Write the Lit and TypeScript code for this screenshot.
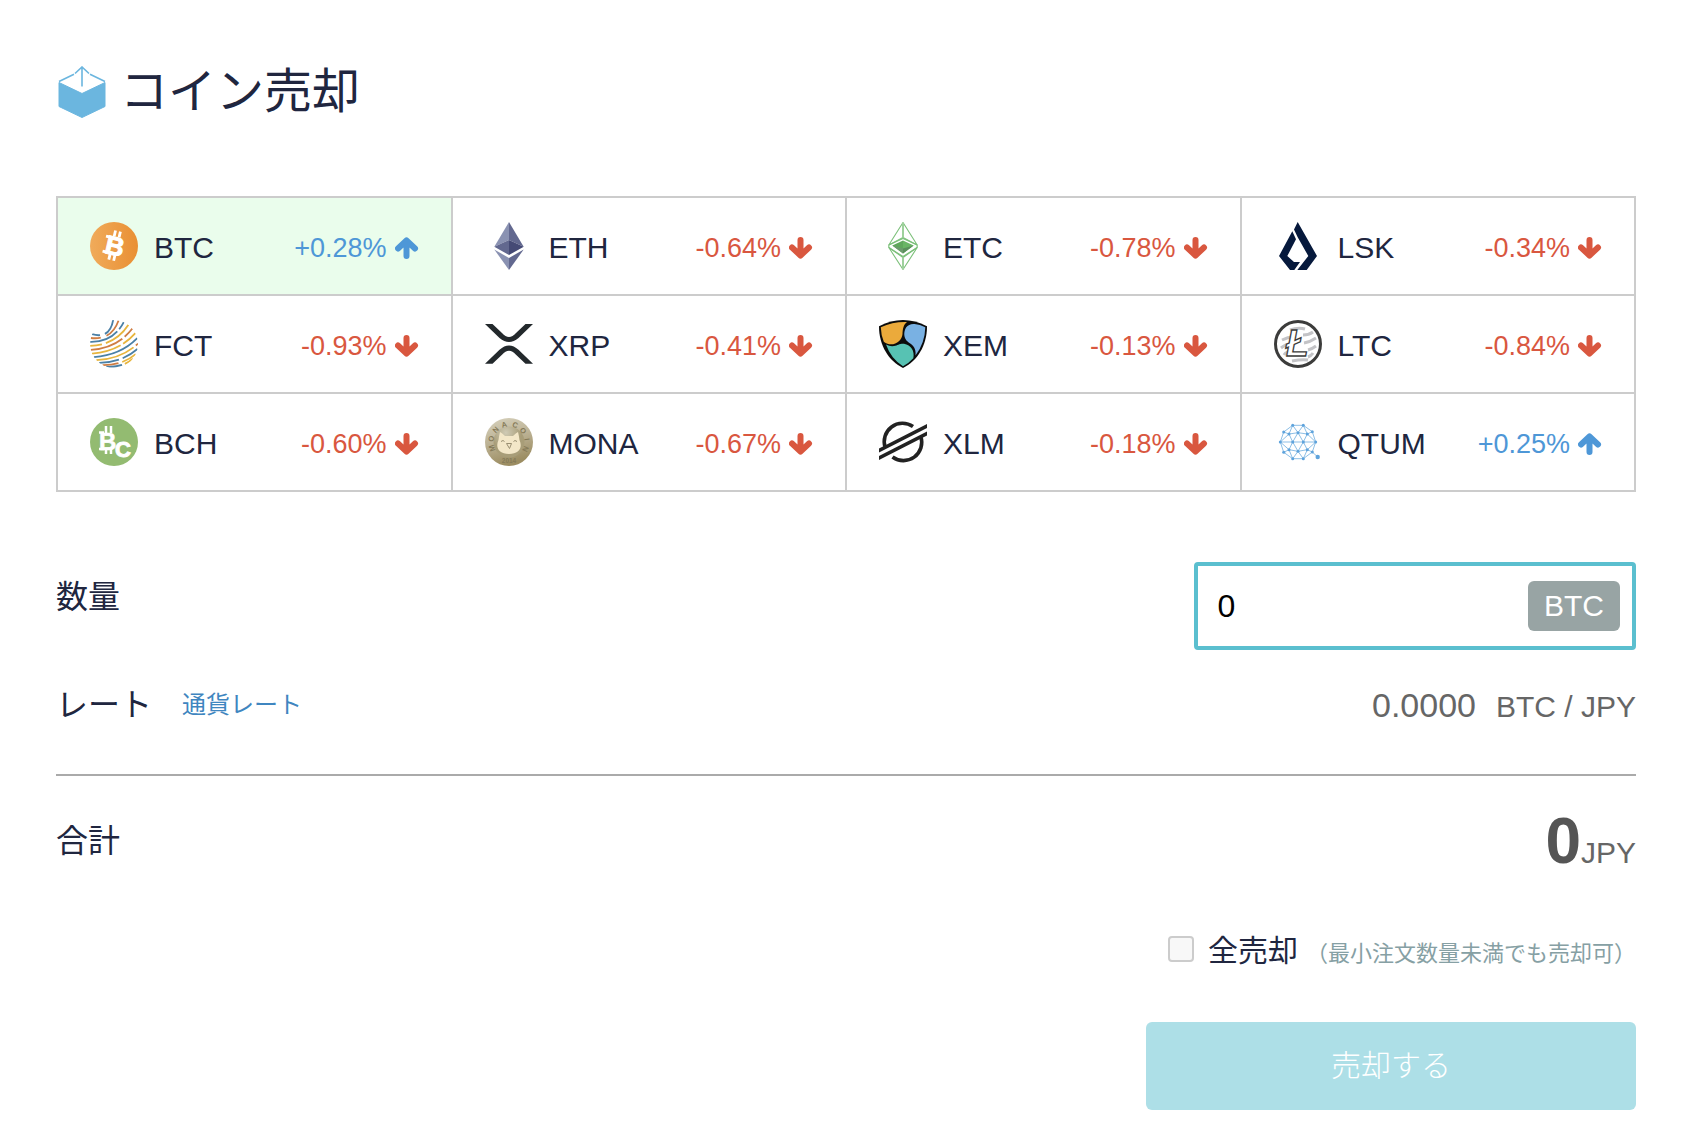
import { LitElement, html, svg, css, TemplateResult, SVGTemplateResult } from "lit";
import { customElement, property, state } from "lit/decorators.js";
import { classMap } from "lit/directives/class-map.js";

interface Coin {
  code: string;
  change: number;
}

const COINS: Coin[] = [
  { code: "BTC", change: 0.28 },
  { code: "ETH", change: -0.64 },
  { code: "ETC", change: -0.78 },
  { code: "LSK", change: -0.34 },
  { code: "FCT", change: -0.93 },
  { code: "XRP", change: -0.41 },
  { code: "XEM", change: -0.13 },
  { code: "LTC", change: -0.84 },
  { code: "BCH", change: -0.6 },
  { code: "MONA", change: -0.67 },
  { code: "XLM", change: -0.18 },
  { code: "QTUM", change: 0.25 },
];

const QTUM_NODES: [number, number][] = [
  [18.7, 7.3], [29.3, 7.3], [9.7, 14], [38.3, 13.7], [24, 14.7], [15, 16],
  [33.3, 16], [6.3, 24], [18.7, 24], [29.3, 24], [41.7, 24], [15, 31.7],
  [33.3, 31.7], [9.7, 34.3], [38.3, 34], [24, 33.3], [18.7, 40.7], [29.3, 40.7],
];

const QTUM_EDGES: [number, number][] = [
  [0, 1], [0, 2], [1, 3], [0, 4], [1, 4], [0, 5], [1, 6], [2, 5], [3, 6],
  [5, 4], [4, 6], [2, 7], [3, 10], [5, 7], [6, 10], [5, 8], [4, 8], [4, 9],
  [6, 9], [7, 8], [8, 9], [9, 10], [7, 11], [7, 13], [8, 11], [8, 15],
  [9, 15], [9, 12], [10, 12], [10, 14], [11, 13], [12, 14], [11, 15],
  [15, 12], [11, 16], [15, 16], [15, 17], [12, 17], [13, 16], [14, 17], [16, 17],
];

/* letter, angle from the top of the coin */
const MONA_RING: [string, number][] = [
  ["M", -110], ["O", -79], ["N", -47], ["A", -15], ["C", 20], ["O", 51], ["I", 82], ["N", 113],
];

const BLUE = "#4b80a6";
const GOLD = "#e7b53e";
const RUST = "#cf7d43";

/* first colour, its length, gap, second colour: one entry for each band of the globe */
const FCT_BANDS: [string, number, number, string][] = [
  [BLUE, 8, 5, BLUE],
  [RUST, 10, 6, RUST],
  [BLUE, 30, 3, BLUE],
  [GOLD, 12, 4, GOLD],
  [RUST, 34, 3, RUST],
  [GOLD, 30, 3, GOLD],
  [BLUE, 50, 3, BLUE],
  [GOLD, 40, 3, RUST],
  [BLUE, 20, 4, BLUE],
  [RUST, 16, 4, GOLD],
  [BLUE, 16, 3, GOLD],
];

function fctBand([first, length, gap, second]: [string, number, number, string], i: number): SVGTemplateResult {
  const rad = Math.PI / 180;
  const from = (204 - i * 9.5) * rad;
  const to = (-92 + i * 13) * rad;
  const x1 = 24 + 24 * Math.cos(from);
  const y1 = 24 + 24 * Math.sin(from);
  const x2 = 24 + 24 * Math.cos(to);
  const y2 = 24 + 24 * Math.sin(to);
  const sag = 12 - i * 0.7;
  const d = `M${x1} ${y1}Q${(x1 + x2) / 2 + sag * 0.6} ${(y1 + y2) / 2 + sag} ${x2} ${y2}`;
  return svg`
    <path d=${d} stroke=${first} stroke-dasharray="${length} 200"/>
    <path d=${d} stroke=${second} stroke-dasharray="0 ${length + gap} 200"/>`;
}

const LOGOS: Record<string, SVGTemplateResult> = {
  BTC: svg`
    <defs><linearGradient id="btc"><stop offset="0" stop-color="#f0ab5b"/><stop offset="1" stop-color="#e98f33"/></linearGradient></defs>
    <circle cx="24" cy="24" r="24" fill="url(#btc)"/>
    <g transform="rotate(13 24 24)" fill="#fff" stroke="#fff">
      <text class="mark" x="15.5" y="33" font-size="26" stroke-width="1">B</text>
      <path d="M22 8.5v6M27 8.5v6M22 32.5v6M27 32.5v6" stroke-width="2.8"/>
      <path d="M14 16.2h5M14 31.6h5" stroke-width="3"/>
    </g>`,
  ETH: svg`
    <path d="M24 0 9.3 24.7 24 18z" fill="#8a92b2"/><path d="M24 0 38.7 24.7 24 18z" fill="#62688f"/>
    <path d="M9.3 24.7 24 18v15z" fill="#62688f"/><path d="M38.7 24.7 24 18v15z" fill="#454a75"/>
    <path d="M9.3 27.5 24 36v12z" fill="#8a92b2"/><path d="M38.7 27.5 24 36v12z" fill="#62688f"/>`,
  ETC: svg`
    <g fill="none" stroke="#7cc07a" stroke-width="1.1" stroke-linejoin="bevel">
      <path d="M24 .5 9.8 23 24 15.5 38.2 23zM9.8 25.5 24 35.5 38.2 25.5 24 47.5z"/>
      <path d="M9.8 23 24 16.5 38.2 23v2.5L24 34.5 9.8 25.5z"/>
    </g>
    <path d="M24 .5v15M24 35.5v12" stroke="#9ed19c" stroke-width="2"/>
    <path d="M13.3 23.5 24 18.5v13z" fill="#5fa75c"/><path d="M34.7 23.5 24 18.5v13z" fill="#69b565"/>
    <path d="M13.3 23.5 24 26.5v5z" fill="#6c9a6d"/><path d="M34.7 23.5 24 26.5v5z" fill="#5a8f5c"/>`,
  LSK: svg`
    <path d="M23.7 0 43 34 32.7 48H23.3L34.3 34 23.7 15.3 20 7.5z" fill="#06193c"/>
    <path d="M18.3 9.3 22 17.3 13.3 34 20 40H26L20.3 48H16L5 34z" fill="#06193c"/>`,
  FCT: svg`
    <defs><clipPath id="globe"><circle cx="24" cy="24" r="24"/></clipPath></defs>
    <g clip-path="url(#globe)" fill="none" stroke-width="1.8">${FCT_BANDS.map(fctBand)}</g>`,
  XRP: svg`
    <g fill="#23292c">
      <path d="M0 4H7.5L17 13Q24 21 31 13L40.5 4H48L33.5 18Q24 26 14.5 18z"/>
      <path d="M0 43.8H7.5L17 34.8Q24 26.8 31 34.8L40.5 43.8H48L33.5 29.8Q24 21.3 14.5 29.8z"/>
    </g>`,
  XEM: svg`
    <path d="M0 6.3Q24-6.3 48 6.3C48 26 38 41 24 48 10 41 0 26 0 6.3z" fill="#0b0b0b"/>
    <path d="M1.8 7.3Q14 1.5 28 2C24 5 23.8 10 23.5 14 23 22 13 28 4.8 21.8Q2 15 1.8 7.3z" fill="#ebaa3b"/>
    <path d="M46.3 7.3Q41 4.6 35.5 4C28 3.5 25 9 25.3 15 25.8 20 29 22 32 24 36 27 37 31 36.5 35.5Q46 23 46.3 7.3z" fill="#79b1e3"/>
    <path d="M7 24.6Q11 26.6 15 26C19 25.5 20 23.5 25 23.7 32 25 36 31 34.3 38.3Q29 44 24 46.3 12 39 7 24.6z" fill="#57c2b3"/>`,
  LTC: svg`
    <circle cx="24" cy="24" r="22.5" fill="#fff" stroke="#3c3c3b" stroke-width="3"/>
    <g fill="none" stroke="#c3c3c6" stroke-width="3">
      <path d="M16 10Q24 7 31 9M8 20Q14 17 19 17M29 15Q35 15 39 12M7 28Q12 24 16 24M30 23Q36 22 42 18M10 35Q11 33 14 32M34 30Q38 29 42 26M34 37Q37 36 39 33M18 41Q28 39 34 40"/>
    </g>
    <text class="mark slant" x="12" y="36" font-size="37" fill="#fff" stroke="#3c3c3b" stroke-width="1.3">Ł</text>`,
  BCH: svg`
    <circle cx="24" cy="24" r="24" fill="#93bb71"/>
    <g fill="#fff" stroke="#fff">
      <text class="mark" x="9" y="31.5" font-size="24" stroke-width=".6">B</text>
      <path d="M16 8v7M21 8v7M16 31v5M21 31v5" stroke-width="2.5"/>
      <path d="M9 14.500h5M9 31h5" stroke-width="2.500"/>
      <text class="mark" x="25" y="38.500" font-size="22" stroke-width="1">C</text>
    </g>`,
  MONA: svg`
    <defs>
      <linearGradient id="mona" x1="0" y1="0" x2=".3" y2="1"><stop offset="0" stop-color="#d8d3bf"/><stop offset=".5" stop-color="#bdb396"/><stop offset="1" stop-color="#9c8d62"/></linearGradient>
      <radialGradient id="monaIn" cx=".4" cy=".2"><stop offset="0" stop-color="#cfcab4"/><stop offset="1" stop-color="#a89d78"/></radialGradient>
    </defs>
    <circle cx="24" cy="24" r="24" fill="url(#mona)"/>
    <circle cx="24" cy="24" r="15.5" fill="url(#monaIn)"/>
    <path d="M15 14Q17 15 20 18H28Q31 15 33 14Q34 18 34.5 22C38 30 34 36 24 36S10 30 13.5 22Q14 18 15 14z" fill="#f3e7c8"/>
    <path d="M21.5 25.5 26.5 25.5 24.5 30.5zM16 23.5l2-1 1.5 1M28.5 23.5l1.5-1 2 1" fill="none" stroke="#9a8f72" stroke-width="1"/>
    ${MONA_RING.map(
      ([letter, angle]) => svg`<text class="ring" x="24" y="8.5" text-anchor="middle" font-size="7.5" transform="rotate(${angle} 24 24)">${letter}</text>`,
    )}
    <text class="ring" x="24" y="45" text-anchor="middle" font-size="6.5">2014</text>`,
  XLM: svg`
    <path d="M6.2 29.5A18.3 18.3 0 0 1 34 8.6M13.5 39A18.3 18.3 0 0 0 41.8 18.5" fill="none" stroke="#222" stroke-width="3.6"/>
    <path d="M0 30.5 48 6V9.9L0 34.4zM0 38 48 13.6V17.6L0 42z" fill="#222"/>`,
  QTUM: svg`
    <g stroke="#8dbfe6" stroke-width="1">
      ${QTUM_EDGES.map(([a, b]) => svg`<line x1=${QTUM_NODES[a][0]} y1=${QTUM_NODES[a][1]} x2=${QTUM_NODES[b][0]} y2=${QTUM_NODES[b][1]}/>`)}
      <line x1="38.3" y1="34" x2="43.7" y2="39"/>
    </g>
    <g fill="#5ea3dc">
      ${QTUM_NODES.map(([x, y]) => svg`<circle cx=${x} cy=${y} r="1.500"/>`)}
      <circle cx="43.7" cy="39" r="2.200"/>
    </g>`,
};

@customElement("coin-tile")
class CoinTile extends LitElement {
  @property({ attribute: false }) coin!: Coin;
  @property({ type: Boolean }) selected = false;

  static styles = css`
    :host {
      display: block;
      border: solid #ccc;
      border-width: 0 2px 2px 0;
    }
    .tile {
      display: flex;
      align-items: center;
      gap: 16px;
      width: 100%;
      height: 96px;
      padding: 0 32px;
      border: 0;
      background: #fff;
      color: #20263f;
      font: 30px/48px "Liberation Sans", sans-serif;
      cursor: pointer;
    }
    .tile.selected {
      background: #eafdec;
    }
    .logo {
      flex: none;
      width: 48px;
      height: 48px;
    }
    .mark {
      font-family: "Liberation Sans", sans-serif;
      font-weight: 700;
    }
    .slant {
      font-style: italic;
    }
    .ring {
      font-family: "Liberation Sans", sans-serif;
      font-weight: 700;
      fill: #857a58;
    }
    .code,
    .change {
      padding-top: 4px;
    }
    .change {
      display: flex;
      align-items: center;
      gap: 8px;
      margin-left: auto;
      font-size: 27px;
      color: #d9573f;
    }
    .change.up {
      color: #4e97d7;
    }
    .arrow {
      width: 24px;
      height: 22px;
      fill: none;
      stroke: currentColor;
      stroke-width: 6;
      stroke-linecap: round;
      stroke-linejoin: round;
    }
  `;

  render(): TemplateResult {
    const { code, change } = this.coin;
    const up = change > 0;
    return html`
      <button type="button" class=${classMap({ tile: true, selected: this.selected })} aria-pressed=${this.selected ? "true" : "false"}>
        <svg class="logo" viewBox="0 0 48 48" aria-hidden="true">${LOGOS[code]}</svg>
        <span class="code">${code}</span>
        <span class=${classMap({ change: true, up })}>
          <span>${up ? "+" : ""}${change.toFixed(2)}%</span>
          <svg class="arrow" viewBox="0 0 24 22" aria-hidden="true">
            ${up
              ? svg`<path d="M11.5 19V4M3 11.5 11.5 3.5 20 11.5"/>`
              : svg`<path d="M11.5 3V18M3 10.5 11.5 18.5 20 10.5"/>`}
          </svg>
        </span>
      </button>
    `;
  }
}

@customElement("app-root")
class AppRoot extends LitElement {
  @state() private selected = "BTC";

  static styles = css`
    :host {
      display: block;
      background: #fff;
      color: #20263f;
      font: 30px/48px "Liberation Sans", "Noto Sans CJK JP", sans-serif;
    }
    .page {
      padding: 56px 48px 36px 56px;
    }
    .title {
      display: flex;
      align-items: center;
      gap: 12px;
      margin: 0 0 68px;
      font-size: 48px;
      font-weight: 400;
      line-height: 72px;
    }
    .box {
      width: 52px;
      height: 52px;
    }
    .coins {
      display: grid;
      grid-template-columns: repeat(4, 1fr);
      border: solid #ccc;
      border-width: 2px 0 0 2px;
    }
    .row {
      display: flex;
      justify-content: space-between;
      align-items: flex-start;
    }
    .label {
      font-size: 32px;
      line-height: 70px;
    }
    .quantity {
      margin-top: 70px;
    }
    .field {
      display: flex;
      align-items: center;
      box-sizing: border-box;
      width: 28%;
      height: 88px;
      padding: 0 12px 0 20px;
      border: 4px solid #5bbfcf;
      border-radius: 4px;
    }
    .amount {
      flex: 1;
      min-width: 0;
      padding: 0;
      border: 0;
      outline: 0;
      background: none;
      color: #000;
      font: 32px/48px "Liberation Sans", sans-serif;
    }
    .unit {
      padding: 1px 16px;
      border-radius: 6px;
      background: #98a4a4;
      color: #fff;
    }
    .rate {
      margin-top: 20px;
      padding-bottom: 34px;
      border-bottom: 2px solid #aaa;
    }
    .rate-name {
      display: flex;
      align-items: center;
      gap: 30px;
    }
    .link {
      color: #3f86c0;
      font-size: 24px;
      text-decoration: none;
    }
    .value {
      color: #666;
    }
    .number {
      margin-right: 20px;
      font-size: 34px;
      line-height: 70px;
    }
    .total {
      padding-top: 30px;
    }
    .sum {
      color: #555;
      font-size: 64px;
      line-height: 70px;
    }
    .all {
      display: flex;
      justify-content: flex-end;
      align-items: center;
      margin-top: 42px;
    }
    .all-label {
      padding-top: 8px;
    }
    .check {
      appearance: none;
      width: 26px;
      height: 26px;
      margin: 0 14px 0 0;
      border: 2px solid #ccc;
      border-radius: 4px;
      background: #f8f8f8;
    }
    .check:checked {
      background: #5bbfcf;
    }
    .note {
      margin-left: 8px;
      color: #86a0a4;
      font-size: 22px;
    }
    .submit {
      display: block;
      width: 31%;
      height: 88px;
      margin: 44px 0 0 auto;
      border: 0;
      border-radius: 6px;
      background: #addfe7;
      color: #fff;
      font: 300 30px/48px "Liberation Sans", "Noto Sans CJK JP", sans-serif;
    }
  `;

  render(): TemplateResult {
    return html`
      <main class="page">
        <h1 class="title">
          <svg class="box" viewBox="-2 0 52 52" aria-hidden="true">
            <path d="M1 16.5 24 27.5 47 16.5V40.5L24 51.5 1 40.5z" fill="#6bb6df" stroke="#6bb6df" stroke-linejoin="round"/>
            <path d="M1 15.5 16 8.2M47 15.5 32 8.2M24 1V20.5M17 7.5 24 1 31 7.5" fill="none" stroke="#6bb6df" stroke-width="1.6"/>
          </svg>
          <span>コイン売却</span>
        </h1>

        <div class="coins">
          ${COINS.map(
            (coin) => html`<coin-tile .coin=${coin} ?selected=${coin.code === this.selected} @click=${() => (this.selected = coin.code)}></coin-tile>`,
          )}
        </div>

        <div class="row quantity">
          <label class="label" for="amount">数量</label>
          <div class="field">
            <input class="amount" id="amount" type="text" inputmode="decimal" value="0" />
            <span class="unit">${this.selected}</span>
          </div>
        </div>

        <div class="row rate">
          <div class="rate-name"><span class="label">レート</span><a class="link" href="#rates">通貨レート</a></div>
          <div class="value"><span class="number">0.0000</span>${this.selected} / JPY</div>
        </div>

        <div class="row total">
          <span class="label">合計</span>
          <div class="value"><strong class="sum">0</strong>JPY</div>
        </div>

        <div class="all">
          <input class="check" id="all" type="checkbox" />
          <label class="all-label" for="all">全売却<span class="note">（最小注文数量未満でも売却可）</span></label>
        </div>

        <button class="submit" type="button">売却する</button>
      </main>
    `;
  }
}
